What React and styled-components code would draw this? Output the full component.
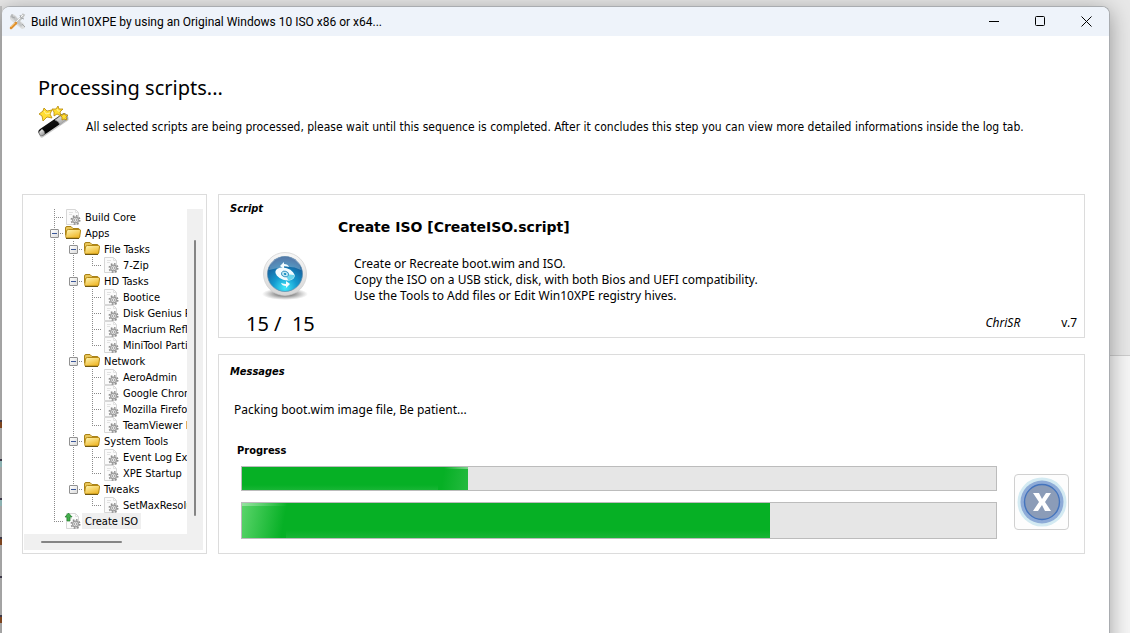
import React, { useState } from "react";
import styled, { createGlobalStyle, css } from "styled-components";

const uiFont = `"DejaVu Sans Condensed", "DejaVu Sans", Tahoma, sans-serif`;
const bodyFont = `"Noto Sans", Tahoma, sans-serif`;

const GlobalStyle = createGlobalStyle`
  * { box-sizing: border-box; }
  body {
    margin: 0;
    color: #000;
    font: 12px/16px ${uiFont};
    font-stretch: condensed;
  }
  button { font: inherit; padding: 0; cursor: default; }
  svg { flex: none; }
  h1, h2, h3, p, ul { margin: 0; padding: 0; }
`;

const Desktop = styled.div`
  display: flex;
  min-height: 100vh;
  padding: 6px 20px 0 0;
  overflow: hidden;
  background: linear-gradient(#e8e8e8 355px, #cdcdcd 355px, #cdcdcd 356px, #f6f6f6 356px);
`;

const Backdrop = styled.div`
  flex: none;
  width: 2px;
  padding-top: 414px;
  background: #c4c4c4;
`;

const Fragment = styled.div`
  height: 8px;
  margin-bottom: 31px;
  border-top: 2px solid #4a4658;
  background: ${(p) => p.$color};
`;

const Window = styled.main`
  flex: 1;
  min-width: 0;
  overflow: hidden;
  background: #fff;
  border: 1px solid #a9acb0;
  border-width: 1px 1px 0 0;
  border-radius: 8px 8px 0 0;
  box-shadow: 0 4px 22px rgba(0, 0, 0, 0.36);
`;

const TitleBar = styled.header`
  display: flex;
  align-items: center;
  height: 29px;
  padding-left: 7px;
  background: #eef3fa;
`;

const WindowTitle = styled.span`
  flex: 1;
  margin-left: 5px;
  font-family: Roboto, "Segoe UI", sans-serif;
  font-size: 12px;
  font-stretch: normal;
  white-space: nowrap;
`;

const CaptionButton = styled.button`
  display: flex;
  align-items: center;
  justify-content: center;
  width: 46px;
  height: 29px;
  border: 0;
  background: transparent;
`;

const Intro = styled.section`
  padding: 38px 36px 0;
`;

const Heading = styled.h1`
  font-family: ${bodyFont};
  font-stretch: normal;
  font-size: 20px;
  line-height: 28px;
  font-weight: 400;
`;

const IntroRow = styled.div`
  display: flex;
  align-items: center;
  gap: 16px;
  height: 40px;
`;

const IntroText = styled.p`
  padding-top: 10px;
`;

const Content = styled.div`
  display: flex;
  gap: 11px;
  padding: 52px 24px 79px 20px;
`;

const Panel = styled.section`
  border: 1px solid #dcdcdc;
  background: #fff;
`;

const TreePanel = styled(Panel)`
  flex: none;
  display: grid;
  grid-template: 1fr 16px / 1fr 16px;
  width: 185px;
  padding: 14px 3px 3px 1px;
`;

const TreeView = styled.ul`
  min-width: 0;
  padding-left: 21px;
  overflow: hidden;
  list-style: none;
  font-size: 11px;
`;

const TreeRow = styled.li`
  display: flex;
  align-items: center;
  height: 16px;
  white-space: nowrap;
`;

const dotsDown = "repeating-linear-gradient(#8a8a8a 0 1px, transparent 1px 2px)";
const dotsAcross = "repeating-linear-gradient(90deg, #8a8a8a 0 1px, transparent 1px 2px)";

const Guide = styled.span`
  flex: none;
  display: flex;
  align-items: center;
  width: 19px;
  height: 16px;
  padding-left: 5px;
  background-repeat: no-repeat;
  ${(p) => p.$kind === "pass" && css`
    background-image: ${dotsDown};
    background-size: 1px 16px;
    background-position: 9px 0;
  `}
  ${(p) => (p.$kind === "tee" || p.$kind === "elbow") && css`
    background-image: ${dotsDown}, ${dotsAcross};
    background-size: 1px ${p.$kind === "tee" ? 16 : 8}px, 10px 1px;
    background-position: 9px 0, 9px 8px;
  `}
`;

const Toggle = styled.button`
  display: flex;
  align-items: center;
  justify-content: center;
  width: 9px;
  height: 9px;
  border: 1px solid #919191;
  border-radius: 1px;
  background: linear-gradient(135deg, #fff, #dcdcdc);
  &::before {
    content: "";
    width: 5px;
    height: 1px;
    background: #3b5798;
  }
`;

const TreeLabel = styled.span`
  padding: 2px 3px 0;
  line-height: 14px;
  background: ${(p) => (p.$selected ? "#efefef" : "transparent")};
`;

const VerticalTrack = styled.div`
  grid-row: 1 / 3;
  grid-column: 2;
  padding: 31px 7px 34px;
  background: #f0f0f0;
`;

const HorizontalTrack = styled.div`
  grid-row: 2;
  grid-column: 1;
  padding: 7px 65px 7px 17px;
  background: #f0f0f0;
`;

const Thumb = styled.div`
  height: 100%;
  border-radius: 1px;
  background: #858585;
`;

const Details = styled.div`
  flex: 1;
  min-width: 0;
  display: flex;
  flex-direction: column;
  gap: 16px;
`;

const ScriptPanel = styled(Panel)`
  display: flex;
  height: 144px;
  padding: 6px 7px 0 11px;
`;

const MessagePanel = styled(Panel)`
  height: 200px;
  padding: 9px 15px 0 11px;
`;

const Legend = styled.h3`
  font-size: 11px;
  line-height: 16px;
  font-style: italic;
  font-weight: 700;
`;

const Summary = styled.div`
  flex: none;
  display: flex;
  flex-direction: column;
  width: 108px;
`;

const ScriptIcon = styled.div`
  height: 48px;
  margin: 35px 0 10px 32px;
`;

const Counter = styled.div`
  padding-left: 16px;
  font-family: ${bodyFont};
  font-stretch: normal;
  font-size: 20px;
  line-height: 28px;
  white-space: pre;
`;

const ScriptInfo = styled.div`
  flex: 1;
  min-width: 0;
  padding-top: 16px;
  font-family: ${bodyFont};
  font-stretch: normal;
`;

const ScriptTitle = styled.h2`
  font-family: "DejaVu Sans", Tahoma, sans-serif;
  font-size: 14px;
  line-height: 20px;
  font-weight: 700;
`;

const Description = styled.p`
  padding: 19px 16px 0;
`;

const Credits = styled.div`
  display: flex;
  justify-content: flex-end;
  gap: 41px;
  padding-top: 11px;
`;

const Message = styled.p`
  padding: 22px 4px 0;
  font-family: ${bodyFont};
  font-stretch: normal;
`;

const ProgressLabel = styled.h3`
  padding: 25px 7px 0;
  font-size: 11px;
  line-height: 16px;
`;

const ProgressRow = styled.div`
  display: flex;
  gap: 17px;
  padding: 7px 0 0 11px;
`;

const Bars = styled.div`
  flex: 1;
  display: flex;
  flex-direction: column;
  gap: 11px;
`;

const Bar = styled.div`
  height: ${(p) => (p.$tall ? 37 : 25)}px;
  border: 1px solid #bcbcbc;
  background: #e6e6e6;
`;

const BarFill = styled.div`
  height: 100%;
  background:
    ${(p) => p.$glow === "start"
      ? "linear-gradient(90deg, rgba(255,255,255,.35), transparent) 0 0 / 46px 3px no-repeat, linear-gradient(100deg, #5bd56b, #06b025 90%) 0 0 / 44px 100% no-repeat"
      : "linear-gradient(90deg, transparent, rgba(255,255,255,.4)) 100% 0 / 24px 2px no-repeat, linear-gradient(100deg, #06b025 20%, #26ba40) 100% 0 / 30px 100% no-repeat"},
    linear-gradient(#06b025 78%, #18b535);
`;

const StopButton = styled.button`
  flex: none;
  display: flex;
  align-items: center;
  justify-content: center;
  width: 55px;
  height: 56px;
  margin-top: 8px;
  border: 1px solid #d0d0d0;
  border-radius: 4px;
  background: #fdfdfd;
`;

const ToolsIcon = () => (
  <svg width="17" height="17" viewBox="0 0 17 17" aria-hidden="true">
    <path d="M1 3l3-2 3 2 3 4 5 4 1 4-3 1-4-3-5-4-3-3z" fill="#dcdddd" />
    <path d="M2 2l4 1 8 9-2 2-8-8-3-2z" fill="#c4c6c7" />
    <path d="M15 1l-2 3-7 7" stroke="#c3c5c5" strokeWidth="3" fill="none" />
    <path d="M14 2l-8 8" stroke="#f5f5f5" strokeWidth="1" />
    <path d="M11 2l1 3 3 1M3 1v3l3 1M13 11l3 3" stroke="#a5a8aa" fill="none" />
    <path d="M7 10l-5 5" stroke="#e0912f" strokeWidth="2.500" strokeLinecap="round" />
    <path d="M6 10l-4 4" stroke="#f5bd65" />
  </svg>
);

const WandIcon = () => (
  <svg width="32" height="32" viewBox="0 0 32 32" aria-hidden="true">
    <defs>
      <linearGradient id="rod" x1="0" y1="0" x2=".7" y2="1">
        <stop offset="0" stopColor="#777" /><stop offset=".4" stopColor="#111" /><stop offset="1" stopColor="#000" />
      </linearGradient>
      <linearGradient id="tip" x1="0" y1="0" x2=".6" y2="1">
        <stop offset="0" stopColor="#fff" /><stop offset="1" stopColor="#999" />
      </linearGradient>
    </defs>
    <path d="M4 29L28 13" stroke="#777" strokeOpacity=".4" strokeWidth="5" strokeLinecap="round" />
    <path d="M4 26L26 11" stroke="url(#rod)" strokeWidth="7" strokeLinecap="round" />
    <path d="M17 14l8-6q4-1 5 4l-8 7q-1-4-5-5z" fill="url(#tip)" stroke="#aaa" strokeWidth=".6" />
    <path d="M1 26l3-3q3 2 3 5l-3 2q-3 0-3-4z" fill="url(#tip)" stroke="#777" strokeWidth=".6" />
    <g fill="#ffdd32" stroke="#b88908" strokeWidth=".8" strokeLinejoin="round">
      <path d="M6 2l3 3 5-1-2 4 2 4-5-1-4 4-1-5-3-2 4-3z" />
      <path d="M20 0l1 3 4 0-3 3 1 4-4-2-3 2 0-4-2-3 4 0z" />
      <path d="M26 7l1 2 3 0-2 2 1 3-3-1-2 1 0-3-2-2 3 0z" />
    </g>
    <path d="M6 5l2 3 4-1M19 3l1 2 2 0" stroke="#fff39b" fill="none" />
  </svg>
);

const FolderIcon = () => (
  <svg width="18" height="16" viewBox="0 0 18 16" aria-hidden="true">
    <defs>
      <linearGradient id="folder" x1="0" y1="0" x2=".6" y2="1">
        <stop offset="0" stopColor="#fff6b5" /><stop offset="1" stopColor="#efb92c" />
      </linearGradient>
    </defs>
    <path d="M1.500 10V3q0-1.500 1.500-1.500h4L9 3.500h5q1.500 0 1.500 1.500v7z" fill="#e9c65a" stroke="#a98218" />
    <path d="M4.500 4.500h11q1.200 0 1 1.500l-.8 6q-.2 1-1.200 1H3q-1.500 0-1.300-1.500l.8-5.500q.3-1.500 2-1.500z" fill="url(#folder)" stroke="#b68a16" />
    <path d="M2 13.500h13" stroke="#705812" />
  </svg>
);

const ScriptFileIcon = ({ updated }) => (
  <svg width="18" height="16" viewBox="0 0 18 16" aria-hidden="true">
    <path d="M2.500.5h9l3 3v12h-12z" fill="#fbfbfb" stroke="#d7d7d7" />
    <path d="M11.500.5v3h3M5 3.500h4M5 5.500h3" fill="none" stroke="#e1e1e1" />
    <circle cx="11.500" cy="11" r="4.200" fill="none" stroke="#8f8f8f" strokeWidth="1.600" strokeDasharray="1.650 1.650" />
    <circle cx="11.500" cy="11" r="2.900" fill="#e6e6e6" stroke="#999" strokeWidth="1.100" />
    <circle cx="11.500" cy="11" r="1.200" fill="#fff" stroke="#777" strokeWidth=".6" />
    {updated && <path d="M4.500 0L8 4H6v4H3V4H1z" fill="#43ae4b" stroke="#23802d" strokeWidth=".7" />}
  </svg>
);

const DiscIcon = () => (
  <svg width="46" height="48" viewBox="0 0 46 48" aria-hidden="true">
    <defs>
      <radialGradient id="orb" cx=".5" cy=".9" r=".85">
        <stop offset="0" stopColor="#42e9fa" /><stop offset=".4" stopColor="#149bd0" /><stop offset="1" stopColor="#164b8b" />
      </radialGradient>
      <linearGradient id="rim" x1="0" y1="0" x2="0" y2="1">
        <stop offset="0" stopColor="#f8f8f8" /><stop offset="1" stopColor="#d5d5d5" />
      </linearGradient>
      <radialGradient id="floor">
        <stop offset="0" stopColor="#444" /><stop offset="1" stopColor="#666" stopOpacity="0" />
      </radialGradient>
    </defs>
    <ellipse cx="23" cy="42" rx="23" ry="6" fill="url(#floor)" />
    <circle cx="23" cy="22" r="21.500" fill="url(#rim)" stroke="#d0d0d0" strokeWidth=".7" />
    <circle cx="23" cy="22" r="17.500" fill="url(#orb)" stroke="#5b88aa" strokeWidth=".7" />
    <path d="M7 18Q9 5 23 5t16 13q-8-4-16-3T7 18z" fill="#fff" opacity=".28" />
    <g transform="rotate(18 23 22)">
      <ellipse cx="23" cy="22" rx="10" ry="6" fill="#f4fcff" />
      <path d="M23 22l9-2q2 4-4 7z" fill="#6bd5ec" />
      <ellipse cx="23" cy="22" rx="3.600" ry="2.800" fill="#c4ecf6" stroke="#2084b8" strokeWidth=".8" />
      <ellipse cx="23" cy="22" rx="1.300" ry="1" fill="#1689bf" />
    </g>
    <path d="M18 14l4-4v2q4 0 5 3-3-1-5-1v3zM28 32l-4 4v-2q-4 0-5-3 3 1 5 1v-3z" fill="#f5fdff" />
  </svg>
);

const StopIcon = () => (
  <svg width="50" height="50" viewBox="0 0 50 50" aria-hidden="true">
    <circle cx="25" cy="25" r="24.500" fill="#d3eaf2" />
    <circle cx="25" cy="25" r="21.500" fill="#8eabd7" />
    <circle cx="25" cy="25" r="17.500" fill="#8b9cb8" stroke="#4474bd" strokeWidth="1.400" />
    <path d="M16 16h6l3 6 4-6h5l-6 9 6 9h-6l-3-6-4 6h-5l6-9z" fill="#fff" />
  </svg>
);

const tree = [
  { name: "Build Core" },
  { name: "Apps", items: [
    { name: "File Tasks", items: [{ name: "7-Zip" }] },
    { name: "HD Tasks", items: [{ name: "Bootice" }, { name: "Disk Genius Pro" }, { name: "Macrium Reflect" }, { name: "MiniTool Partition" }] },
    { name: "Network", items: [{ name: "AeroAdmin" }, { name: "Google Chrome" }, { name: "Mozilla Firefox" }, { name: "TeamViewer Portable" }] },
    { name: "System Tools", items: [{ name: "Event Log Explorer" }, { name: "XPE Startup" }] },
    { name: "Tweaks", items: [{ name: "SetMaxResolution" }] },
  ] },
  { name: "Create ISO", selected: true },
];

function TreeItems({ items, trail = [] }) {
  return items.map((item, i) => (
    <TreeItem key={item.name} item={item} trail={trail} last={i === items.length - 1} />
  ));
}

function TreeItem({ item, trail, last }) {
  const [open, setOpen] = useState(true);
  return (
    <>
      <TreeRow>
        {trail.map((kind, i) => <Guide key={i} $kind={kind} />)}
        <Guide $kind={last ? "elbow" : "tee"}>
          {item.items && (
            <Toggle type="button" aria-label={`Toggle ${item.name}`} aria-expanded={open} onClick={() => setOpen(!open)} />
          )}
        </Guide>
        {item.items ? <FolderIcon /> : <ScriptFileIcon updated={item.selected} />}
        <TreeLabel $selected={item.selected}>{item.name}</TreeLabel>
      </TreeRow>
      {item.items && open && <TreeItems items={item.items} trail={[...trail, last ? "blank" : "pass"]} />}
    </>
  );
}

function ProgressBar({ value, label, tall, glow }) {
  return (
    <Bar $tall={tall} role="progressbar" aria-label={label} aria-valuenow={value} aria-valuemin={0} aria-valuemax={100}>
      <BarFill $glow={glow} style={{ width: `${value}%` }} />
    </Bar>
  );
}

export default function App() {
  return (
    <>
      <GlobalStyle />
      <Desktop>
        <Backdrop>
          {["#955326", "#a9d5d5", "#a9d5d5", "#955326", "#c4c4c4", "#955326"].map((color, i) => (
            <Fragment key={i} $color={color} />
          ))}
        </Backdrop>
        <Window>
          <TitleBar>
            <ToolsIcon />
            <WindowTitle>Build Win10XPE by using an Original Windows 10 ISO x86 or x64...</WindowTitle>
            <CaptionButton type="button" aria-label="Minimize">
              <svg width="11" height="11"><path d="M0 5.500h10" stroke="#000" /></svg>
            </CaptionButton>
            <CaptionButton type="button" aria-label="Maximize">
              <svg width="11" height="11"><rect x=".5" y=".5" width="9" height="9" rx="1" fill="none" stroke="#000" /></svg>
            </CaptionButton>
            <CaptionButton type="button" aria-label="Close">
              <svg width="11" height="11"><path d="M.5.5l10 10M10.500.5l-10 10" stroke="#000" /></svg>
            </CaptionButton>
          </TitleBar>
          <Intro>
            <Heading>Processing scripts...</Heading>
            <IntroRow>
              <WandIcon />
              <IntroText>
                All selected scripts are being processed, please wait until this sequence is completed. After it concludes this step you can view more detailed informations inside the log tab.
              </IntroText>
            </IntroRow>
          </Intro>
          <Content>
            <TreePanel>
              <TreeView><TreeItems items={tree} /></TreeView>
              <VerticalTrack><Thumb /></VerticalTrack>
              <HorizontalTrack><Thumb /></HorizontalTrack>
            </TreePanel>
            <Details>
              <ScriptPanel>
                <Summary>
                  <Legend>Script</Legend>
                  <ScriptIcon><DiscIcon /></ScriptIcon>
                  <Counter>15 /  15</Counter>
                </Summary>
                <ScriptInfo>
                  <ScriptTitle>Create ISO [CreateISO.script]</ScriptTitle>
                  <Description>
                    Create or Recreate boot.wim and ISO.<br />
                    Copy the ISO on a USB stick, disk, with both Bios and UEFI compatibility.<br />
                    Use the Tools to Add files or Edit Win10XPE registry hives.
                  </Description>
                  <Credits><em>ChriSR</em><span>v.7</span></Credits>
                </ScriptInfo>
              </ScriptPanel>
              <MessagePanel>
                <Legend>Messages</Legend>
                <Message>Packing boot.wim image file, Be patient...</Message>
                <ProgressLabel>Progress</ProgressLabel>
                <ProgressRow>
                  <Bars>
                    <ProgressBar value={30} label="Script progress" glow="end" />
                    <ProgressBar value={70} label="Overall progress" glow="start" tall />
                  </Bars>
                  <StopButton type="button" aria-label="Stop"><StopIcon /></StopButton>
                </ProgressRow>
              </MessagePanel>
            </Details>
          </Content>
        </Window>
      </Desktop>
    </>
  );
}
